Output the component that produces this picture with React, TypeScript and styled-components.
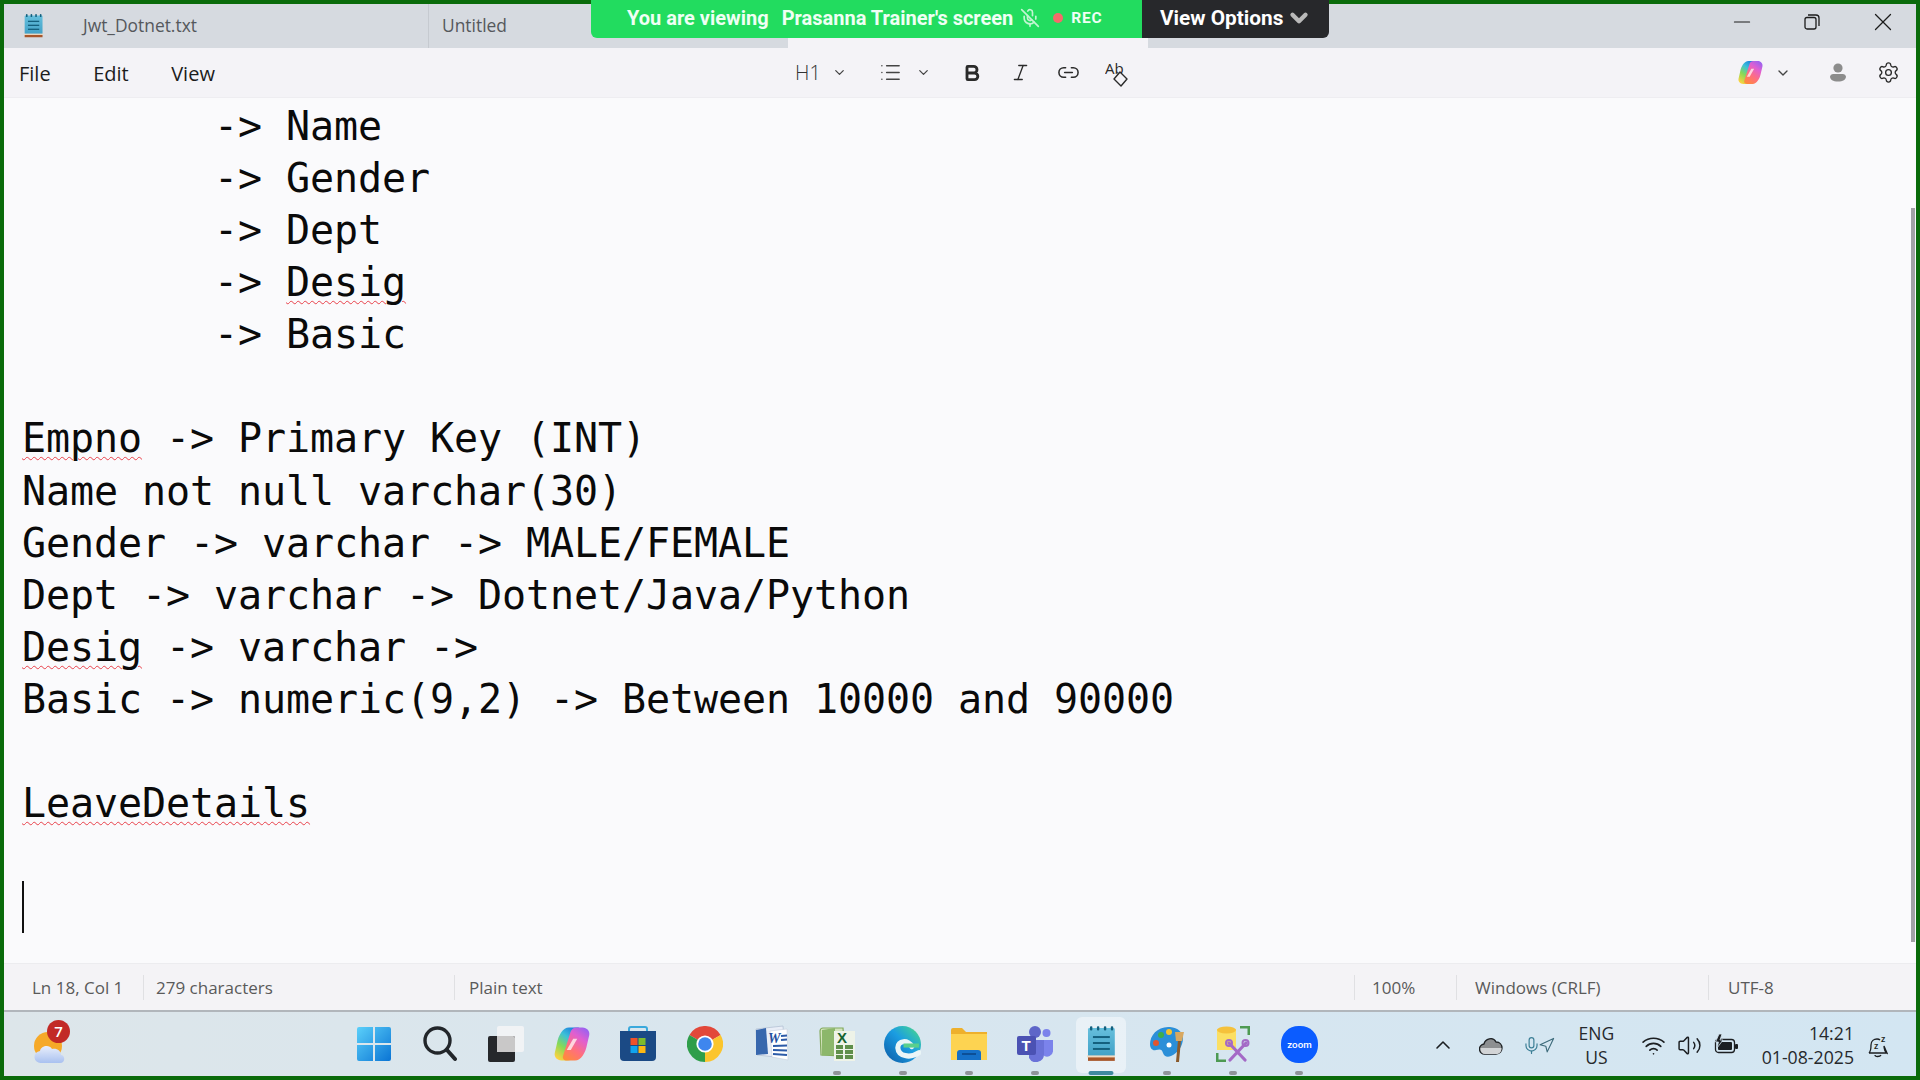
import React from 'react'
import styled, { createGlobalStyle } from 'styled-components'
import { Bold, ChevronDown, ChevronUp, Italic, Link2, List, MicOff, Minus, Mic, Navigation, Settings, Volume2, Wifi, X } from 'lucide-react'

const GlobalStyle = createGlobalStyle`
  html, body { margin: 0; padding: 0; background: #0a6b0a; }
  * { box-sizing: border-box; }
`

const UI_FONT = `"Open Sans", "Noto Sans", sans-serif`

const Frame = styled.div`
  width: 1920px;
  height: 1080px;
  padding: 4px;
  background: #0a6b0a;
  display: flex;
  flex-direction: column;
  position: relative;
  overflow: hidden;
  font-family: ${UI_FONT};
`

/* title bar */
const TitleBar = styled.div`
  height: 44px;
  background: #d6dae0;
  display: flex;
  align-items: stretch;
  flex-shrink: 0;
`
const AppIconBox = styled.div`
  width: 79px;
  padding-left: 20px;
  display: flex;
  align-items: center;
`
const Tab = styled.div<{ $w: number; $line?: boolean }>`
  width: ${p => p.$w}px;
  display: flex;
  align-items: center;
  padding: 0 0 2px ${p => (p.$line ? 13 : 0)}px;
  font-size: 17.4px;
  color: #55585c;
  position: relative;
  border-left: ${p => (p.$line ? '1px solid #c6cad0' : '0')};
`
const ActiveTab = styled.div`
  width: 360px;
  margin-top: auto;
  height: 10px;
  background: #f4f3f7;
`
const WindowControls = styled.div`
  margin-left: auto;
  display: flex;
  align-items: stretch;
`
const WindowButton = styled.div`
  width: 69.5px;
  display: flex;
  align-items: center;
  justify-content: center;
  color: #1c1c1c;
  padding-bottom: 8px;
  &:last-child { padding-left: 4px; }
`

/* zoom banner */
const ViewBanner = styled.div`
  position: absolute;
  top: 0;
  left: 591px;
  height: 38px;
  display: flex;
  font-family: "Roboto", sans-serif;
  font-weight: 700;
  color: #ffffff;
`
const BannerGreen = styled.div`
  width: 551px;
  background: #22dc5f;
  border-radius: 0 0 0 6px;
  display: flex;
  align-items: center;
  padding: 0 0 2px 36px;
  font-size: 20px;
  color: #effff4;
  white-space: nowrap;
`
const BannerName = styled.span`
  margin-left: 13px;
`
const RecDot = styled.span`
  width: 10px;
  height: 10px;
  border-radius: 50%;
  background: #f56a6a;
  margin-left: 13px;
`
const RecLabel = styled.span`
  font-size: 15.5px;
  margin-left: 8px;
  letter-spacing: 0.8px;
`
const BannerDark = styled.div`
  width: 187px;
  background: #27282b;
  border-radius: 0 0 6px 0;
  display: flex;
  align-items: center;
  padding: 0 0 2px 18px;
  font-size: 20.8px;
  white-space: nowrap;
`

/* menu + format bar */
const MenuBar = styled.div`
  height: 50px;
  background: #f4f3f7;
  border-bottom: 1px solid #eeedf1;
  display: flex;
  align-items: center;
  flex-shrink: 0;
  color: #1c1c1c;
`
const MenuGroup = styled.div`
  width: 791px;
  padding: 1px 0 0 15px;
  display: flex;
  gap: 42.5px;
  font-size: 20px;
`
const ToolGroup = styled.div<{ $gap?: number; $ml?: number }>`
  display: flex;
  align-items: center;
  gap: ${p => p.$gap ?? 0}px;
  margin-left: ${p => p.$ml ?? 0}px;
`
const HeadingLabel = styled.span`
  font-size: 20px;
  font-weight: 300;
  color: #333;
  width: 23px;
`
const ToolSlot = styled.div`
  width: 48.5px;
  display: flex;
  justify-content: center;
  align-items: center;
  color: #2a2a2a;
`
const RightTools = styled.div`
  margin-left: auto;
  padding-right: 16px;
  display: flex;
  align-items: center;
`
const GapBox = styled.div<{ $ml: number }>`
  margin-left: ${p => p.$ml}px;
  display: flex;
  align-items: center;
`

/* editor */
const Editor = styled.div`
  flex: 1;
  min-height: 0;
  background: #fafafc;
  position: relative;
  overflow: hidden;
  padding: 2px 0 0 18px;
  font-family: "DejaVu Sans Mono", "Liberation Mono", monospace;
  font-size: 40px;
  line-height: 52.08px;
  letter-spacing: -0.08px;
  color: #0a0a0a;
`
const Line = styled.div`
  height: 52.08px;
  white-space: pre;
`
const Misspelt = styled.span`
  text-decoration: underline wavy #e8404a;
  text-decoration-thickness: 1.2px;
  text-underline-offset: 4px;
`
const Caret = styled.span`
  display: block;
  width: 2px;
  height: 52px;
  background: #111;
`
const ScrollThumb = styled.div`
  position: absolute;
  right: 1px;
  top: 110px;
  width: 4px;
  height: 734px;
  background: #a2a2a6;
`

/* status bar */
const StatusBar = styled.div`
  height: 47px;
  background: #f4f3f6;
  border-top: 1px solid #ececef;
  display: flex;
  align-items: center;
  flex-shrink: 0;
  font-size: 17px;
  color: #5a5a5a;
`
const StatusCell = styled.div<{ $w: number; $pl: number; $line?: boolean }>`
  width: ${p => p.$w}px;
  height: 25px;
  padding-left: ${p => p.$pl}px;
  display: flex;
  align-items: center;
  white-space: nowrap;
  border-left: ${p => (p.$line ? '1px solid #e0e0e3' : '0')};
`

/* taskbar */
const Taskbar = styled.div`
  height: 66px;
  flex-shrink: 0;
  border-top: 2px solid #b1b6bb;
  background: linear-gradient(90deg, #dde6ea 0%, #d8e6ef 45%, #d3e6f2 100%);
  display: flex;
  align-items: center;
  position: relative;
`
const WeatherBox = styled.div`
  width: 337px;
  padding: 7px 0 0 29px;
  display: flex;
  align-items: center;
  position: relative;
`
const WeatherBadge = styled.span`
  position: absolute;
  left: 43px;
  top: -5px;
  width: 23px;
  height: 23px;
  border-radius: 50%;
  background: #c22a26;
  color: #fff;
  font-size: 15px;
  font-weight: 600;
  display: flex;
  align-items: center;
  justify-content: center;
`
const AppSlot = styled.div<{ $active?: boolean }>`
  width: 66.1px;
  height: 64px;
  display: flex;
  align-items: center;
  justify-content: center;
  position: relative;
  &::before {
    content: '';
    display: ${p => (p.$active ? 'block' : 'none')};
    position: absolute;
    top: 5px;
    left: 8px;
    width: 50px;
    height: 56px;
    border-radius: 6px;
    background: rgba(255, 255, 255, 0.45);
  }
  svg { position: relative; }
`
const RunDot = styled.span<{ $active?: boolean }>`
  position: absolute;
  bottom: 1px;
  left: 50%;
  transform: translateX(-50%);
  width: ${p => (p.$active ? 25 : 8)}px;
  height: 4px;
  border-radius: 2px;
  background: ${p => (p.$active ? '#3f8a9e' : '#8f9499')};
`
const Tray = styled.div`
  margin-left: auto;
  display: flex;
  align-items: center;
  padding: 2px 28px 0 0;
  color: #1c1f22;
`
const TrayItem = styled.div<{ $ml: number }>`
  margin-left: ${p => p.$ml}px;
  display: flex;
  align-items: center;
  justify-content: center;
`
const LangText = styled.div`
  font-size: 17.5px;
  line-height: 24px;
  text-align: center;
  color: #26292c;
`
const ClockText = styled.div`
  font-size: 17.7px;
  line-height: 24px;
  text-align: right;
  color: #26292c;
`

const NotepadIcon = ({ size = 36 }: { size?: number }) => (
  <svg width={size * 0.8} height={size} viewBox="0 0 29 36">
    <defs>
      <linearGradient id="np" x1="0" y1="0" x2="0" y2="1">
        <stop offset="0" stopColor="#66bfdc" />
        <stop offset="1" stopColor="#3f9fc6" />
      </linearGradient>
    </defs>
    <rect x="1" y="2" width="27" height="30" rx="1.5" fill="url(#np)" />
    <rect x="1" y="31" width="27" height="4" fill="#a8562a" />
    <rect x="0" y="29.5" width="29" height="2" fill="#f3dcc4" />
    {[4, 11, 18, 25].map(x => (
      <rect key={x} x={x - 1} y="0" width="2.4" height="4.5" rx="1" fill="#14607e" />
    ))}
    <rect x="6" y="10" width="17" height="2" fill="#14607e" />
    <rect x="6" y="16" width="17" height="2" fill="#14607e" />
    <rect x="6" y="22" width="17" height="2" fill="#14607e" />
  </svg>
)

const CopilotIcon = ({ size = 36 }: { size?: number }) => (
  <svg width={size} height={size} viewBox="0 0 24 24">
    <defs>
      <linearGradient id="copL" x1="0.8" y1="0" x2="0.2" y2="1">
        <stop offset="0" stopColor="#1673e0" />
        <stop offset="0.35" stopColor="#3cc0d8" />
        <stop offset="0.65" stopColor="#86d957" />
        <stop offset="1" stopColor="#ffd23f" />
      </linearGradient>
      <linearGradient id="copR" x1="0.8" y1="0" x2="0.2" y2="1">
        <stop offset="0" stopColor="#ff8a3c" />
        <stop offset="0.35" stopColor="#ff6f7d" />
        <stop offset="0.7" stopColor="#e05fd0" />
        <stop offset="1" stopColor="#9a62f0" />
      </linearGradient>
    </defs>
    <path d="M10 1h5.5c1.8 0 3 1.4 2.5 3L13 20c-.6 1.8-2 3-4 3H5C2 23 0 20.5.5 18L2 11.5C3 6 6 1 10 1z" fill="url(#copL)" />
    <path d="M10 1h5.5c1.8 0 3 1.4 2.5 3L13 20c-.6 1.8-2 3-4 3H5C2 23 0 20.5.5 18L2 11.5C3 6 6 1 10 1z" fill="url(#copR)" transform="rotate(180 12 12)" />
    <path d="M12.8 8.5h2.7L11.2 16H8.5z" fill="#ffe9ec" opacity="0.85" />
  </svg>
)

const WindowsIcon = () => (
  <svg width="36" height="36" viewBox="0 0 36 36">
    <defs>
      <linearGradient id="win" x1="0" y1="0" x2="1" y2="1">
        <stop offset="0" stopColor="#5bd0fa" />
        <stop offset="1" stopColor="#0a74d4" />
      </linearGradient>
    </defs>
    <path d="M1 3a2 2 0 0 1 2-2h14v16H1zM19 1h14a2 2 0 0 1 2 2v14H19zM1 19h16v16H3a2 2 0 0 1-2-2zM19 19h16v14a2 2 0 0 1-2 2H19z" fill="url(#win)" />
  </svg>
)

const SearchIcon = () => (
  <svg width="34" height="36" viewBox="0 0 34 36" fill="none" stroke="#22262a" strokeWidth="3.4" strokeLinecap="round">
    <circle cx="14.5" cy="14.5" r="12.5" />
    <path d="M24 24l8 9" strokeWidth="4" />
  </svg>
)

const TaskViewIcon = () => (
  <svg width="36" height="36" viewBox="0 0 36 36">
    <rect x="9" y="0" width="27" height="26" rx="2" fill="#f1f3f5" />
    <rect x="0" y="10" width="27" height="26" rx="2" fill="#26282b" />
    <path d="M9 10h16a2 2 0 0 1 2 2v14H9z" fill="#c9c8c8" />
  </svg>
)

const StoreIcon = () => (
  <svg width="36" height="36" viewBox="0 0 36 36">
    <path d="M9 5V3a2 2 0 0 1 2-2h14a2 2 0 0 1 2 2v2" fill="none" stroke="#3aa9dc" strokeWidth="2" />
    <path d="M0 5h36v26a4 4 0 0 1-4 4H4a4 4 0 0 1-4-4z" fill="#1b4a85" />
    <rect x="10.5" y="12" width="7" height="7" fill="#f0512a" />
    <rect x="18.5" y="12" width="7" height="7" fill="#7ebb2c" />
    <rect x="10.5" y="20" width="7" height="7" fill="#10a4ee" />
    <rect x="18.5" y="20" width="7" height="7" fill="#fdb813" />
  </svg>
)

const ChromeIcon = () => (
  <svg width="36" height="36" viewBox="0 0 36 36">
    <path d="M18 18L2.4 9A18 18 0 0 1 33.6 9z" fill="#e2483a" />
    <path d="M18 18L33.6 9A18 18 0 0 1 18 36z" fill="#fbc52d" />
    <path d="M18 18L18 36A18 18 0 0 1 2.4 9z" fill="#2f9e4a" />
    <circle cx="18" cy="18" r="8.6" fill="#fff" />
    <circle cx="18" cy="18" r="6.8" fill="#3f86ee" />
  </svg>
)

const WordIcon = () => (
  <svg width="36" height="38" viewBox="0 0 36 38">
    <path d="M3 4l27-3 2 32-28-3z" fill="#e9eef7" stroke="#aebbd0" strokeWidth="0.7" />
    <path d="M3 5l10-2 2 26-12 1z" fill="#3767ad" />
    <path d="M34 4l-17 2 2 26 16 3z" fill="#fff" stroke="#c6cfdd" strokeWidth="0.6" />
    <text x="15" y="18" fontFamily="Liberation Serif, serif" fontStyle="italic" fontWeight="700" fontSize="14" fill="#1f4f9e">W</text>
    <path d="M28 11l6-.5M28 15l6-.5M20 21l14-.5M20 25l14 .5M20 29l14 1" stroke="#2c5ba8" strokeWidth="1.8" />
  </svg>
)

const ExcelIcon = () => (
  <svg width="36" height="38" viewBox="0 0 36 38">
    <path d="M1 6a3 3 0 0 1 3-3h20l2 28-24-1z" fill="#d3e4bc" stroke="#82a95c" strokeWidth="1.2" />
    <path d="M3 5l13-2v27l-13 .5z" fill="#8cb76b" />
    <rect x="15" y="6" width="21" height="30" fill="#eef3e8" />
    <text x="18" y="18" fontFamily="Liberation Sans, sans-serif" fontWeight="700" fontSize="15" fill="#17632f">X</text>
    {[20, 25, 30].map(y => (
      <g key={y}>
        <rect x="17" y={y} width="7" height="4" fill="#5f8f4a" />
        <rect x="26" y={y} width="8" height="4" fill="#5f8f4a" />
      </g>
    ))}
  </svg>
)

const EdgeIcon = () => (
  <svg width="37" height="37" viewBox="0 0 36 36">
    <defs>
      <linearGradient id="edgeG" x1="0" y1="1" x2="1" y2="0">
        <stop offset="0" stopColor="#0c59a4" />
        <stop offset="0.55" stopColor="#1b9de2" />
        <stop offset="0.8" stopColor="#35c1b0" />
        <stop offset="1" stopColor="#6fe05f" />
      </linearGradient>
    </defs>
    <circle cx="18" cy="18" r="18" fill="url(#edgeG)" />
    <path d="M27 20C24 13 13 14 13.5 21.5C14 29 25 32 34 26" fill="none" stroke="#eaf5f7" strokeWidth="5" strokeLinecap="round" />
    <path d="M19 19h15" stroke="#59cf8c" strokeWidth="4" />
  </svg>
)

const FolderIcon = () => (
  <svg width="36" height="33" viewBox="0 0 36 33">
    <path d="M0 2a2 2 0 0 1 2-2h9l4 4h21v26H0z" fill="#eeb02c" />
    <path d="M0 6h36v26H0z" fill="#fdd351" />
    <path d="M6 32V25a3 3 0 0 1 3-3h18a3 3 0 0 1 3 3v7z" fill="#1570c8" />
    <rect x="11" y="25" width="14" height="2" fill="#0c4f96" />
  </svg>
)

const TeamsIcon = () => (
  <svg width="36" height="36" viewBox="0 0 36 36">
    <circle cx="29.5" cy="7" r="4" fill="#7b83eb" />
    <circle cx="18" cy="6" r="6" fill="#5e66c8" />
    <path d="M26 14h10v10a6 6 0 0 1-10 5z" fill="#7b83eb" />
    <path d="M12 14h15v14a8 8 0 0 1-15 4z" fill="#6a72d8" />
    <rect x="0" y="10" width="19" height="19" rx="2" fill="#4b52b3" />
    <text x="4.5" y="25" fontFamily="Liberation Sans, sans-serif" fontWeight="700" fontSize="15" fill="#fff">T</text>
  </svg>
)

const PaintIcon = () => (
  <svg width="34" height="37" viewBox="0 0 34 37">
    <path d="M20 1C8 0 0 9 0 18c0 5 3 7 6 6 4-1 6-1 7 3 1 3 4 5 8 3 7-3 12-10 12-18C33 6 28 2 20 1z" fill="#2b8fd8" />
    <circle cx="6" cy="17" r="3" fill="#e2552e" />
    <circle cx="11" cy="9" r="3" fill="#3fae4a" />
    <circle cx="19" cy="6" r="3" fill="#f7c32e" />
    <circle cx="19" cy="19" r="2.5" fill="#fff" />
    <path d="M28 14l-2 22h3l2-22z" fill="#8a5a2b" />
    <path d="M25 6h9l-2 9h-6z" fill="#d8a860" />
  </svg>
)

const DbToolsIcon = () => (
  <svg width="34" height="36" viewBox="0 0 34 36">
    <rect x="1" y="3" width="19" height="21" fill="#fbdf63" />
    <ellipse cx="10.5" cy="4" rx="9.5" ry="3.5" fill="#f5c13b" />
    <path d="M24 1h9v8M1 27v8h9" fill="none" stroke="#4d9a52" strokeWidth="3" />
    <path d="M14 34l16-17M29 34L13 17" stroke="#a46ac6" strokeWidth="3.2" strokeLinecap="round" />
    <circle cx="29.5" cy="17" r="3" fill="none" stroke="#a46ac6" strokeWidth="2" />
    <circle cx="13" cy="17" r="3" fill="none" stroke="#a46ac6" strokeWidth="2" />
  </svg>
)

const ZoomAppIcon = () => (
  <svg width="37" height="37" viewBox="0 0 36 36">
    <rect width="36" height="36" rx="17" fill="#0b5cff" />
    <text x="18" y="21.5" textAnchor="middle" fontFamily="Roboto, sans-serif" fontWeight="500" fontSize="9.5" fill="#fff">zoom</text>
  </svg>
)

const WeatherIcon = () => (
  <svg width="34" height="32" viewBox="0 0 34 32">
    <defs>
      <linearGradient id="cl" x1="0" y1="0" x2="0" y2="1">
        <stop offset="0" stopColor="#e8eefb" />
        <stop offset="1" stopColor="#a9c1f0" />
      </linearGradient>
    </defs>
    <circle cx="15" cy="14" r="14" fill="#f6a928" />
    <path d="M8 31a6 6 0 0 1-1-12c1-5 9-7 12-2 5-1 9 2 9 6 4 0 5 8-1 8z" fill="url(#cl)" />
  </svg>
)

const EraserAbIcon = () => (
  <svg width="24" height="30" viewBox="0 -3 24 30">
    <text x="0" y="13" fontFamily="Open Sans, sans-serif" fontSize="15" fill="#2a2a2a">Ab</text>
    <path d="M15 11l7 7-6 7-7-7z" fill="#f4f3f7" stroke="#2a2a2a" strokeWidth="1.4" strokeLinejoin="round" />
  </svg>
)

const RestoreIcon = () => (
  <svg width="16" height="16" viewBox="0 0 16 16" fill="none" stroke="#1c1c1c" strokeWidth="1.3">
    <rect x="1" y="3.5" width="11" height="11.5" rx="2" />
    <path d="M4 1h8a3 3 0 0 1 3 3v8" />
  </svg>
)

const PersonIcon = () => (
  <svg width="16" height="19" viewBox="0 0 16 19" fill="#8c8c8c">
    <circle cx="8" cy="5" r="4.6" />
    <path d="M0 13.5a3 3 0 0 1 3-2.5h10a3 3 0 0 1 3 2.5c0 3-3 5-8 5s-8-2-8-5z" />
  </svg>
)

const TrayCloud = () => (
  <svg width="24" height="19" viewBox="0 0 24 19">
    <path d="M6 18a5 5 0 0 1-1-10c1-5 9-8 12-2 4 0 6 3 6 6s-2 6-6 6z" fill="#8d8f91" stroke="#1e2124" strokeWidth="1.3" />
    <path d="M1.5 12h21c0 4-2 6-5.5 6H6c-3 0-4.5-2-4.5-6z" fill="#d2d4d6" />
  </svg>
)

const TrayBattery = () => (
  <svg width="24" height="22" viewBox="0 0 24 22">
    <rect x="1.5" y="5.5" width="19" height="13" rx="3" fill="none" stroke="#1c1f22" strokeWidth="1.3" />
    <rect x="4" y="8" width="14" height="8" rx="1" fill="#1c1f22" />
    <rect x="21" y="10" width="3" height="5" rx="1" fill="#1c1f22" />
    <path d="M5 0L1.5 8h3L3 14l6-8H6l2-6z" fill="#1c1f22" stroke="#d6e6f1" strokeWidth="0.8" />
  </svg>
)

const TrayBell = () => (
  <svg width="20" height="28" viewBox="0 -4 20 28" fill="none" stroke="#1c1f22" strokeWidth="1.3">
    <path d="M1 18c2-2 2-4 2-8 0-4 3-6 6-6 1 0 2 0 3 1M16 11c0 3 0 5 3 7zM1 18h18" />
    <path d="M7 20c0 2 5 2 6 0" />
    <text x="6" y="14" fontFamily="Open Sans, sans-serif" fontSize="9" fontWeight="600" fill="#1c1f22" stroke="none">z</text>
    <text x="13" y="7" fontFamily="Open Sans, sans-serif" fontSize="9" fontWeight="600" fill="#1c1f22" stroke="none">z</text>
  </svg>
)

const apps: { id: string; icon: React.ReactNode; running?: boolean; active?: boolean }[] = [
  { id: 'start', icon: <WindowsIcon /> },
  { id: 'search', icon: <SearchIcon /> },
  { id: 'taskview', icon: <TaskViewIcon /> },
  { id: 'copilot', icon: <CopilotIcon /> },
  { id: 'store', icon: <StoreIcon /> },
  { id: 'chrome', icon: <ChromeIcon /> },
  { id: 'word', icon: <WordIcon /> },
  { id: 'excel', icon: <ExcelIcon />, running: true },
  { id: 'edge', icon: <EdgeIcon />, running: true },
  { id: 'folder', icon: <FolderIcon />, running: true },
  { id: 'teams', icon: <TeamsIcon />, running: true },
  { id: 'notepad', icon: <NotepadIcon />, running: true, active: true },
  { id: 'paint', icon: <PaintIcon />, running: true },
  { id: 'dbtools', icon: <DbToolsIcon />, running: true },
  { id: 'zoom', icon: <ZoomAppIcon />, running: true },
]

const App = () => {
  return (
    <Frame>
      <GlobalStyle />
      <TitleBar>
        <AppIconBox>
          <NotepadIcon size={24} />
        </AppIconBox>
        <Tab $w={345}>Jwt_Dotnet.txt</Tab>
        <Tab $w={360} $line>Untitled</Tab>
        <ActiveTab />
        <WindowControls>
          <WindowButton><Minus size={26} strokeWidth={1} /></WindowButton>
          <WindowButton><RestoreIcon /></WindowButton>
          <WindowButton><X size={30} strokeWidth={1.05} /></WindowButton>
        </WindowControls>
      </TitleBar>

      <ViewBanner>
        <BannerGreen>
          You are viewing
          <BannerName>Prasanna Trainer's screen</BannerName>
          <GapBox $ml={7}><MicOff size={20} color="#c3f5d3" /></GapBox>
          <RecDot />
          <RecLabel>REC</RecLabel>
        </BannerGreen>
        <BannerDark>
          View Options
          <GapBox $ml={3}><ChevronDown size={26} strokeWidth={4} color="#b9b9b9" /></GapBox>
        </BannerDark>
      </ViewBanner>

      <MenuBar>
        <MenuGroup>
          <span>File</span>
          <span>Edit</span>
          <span>View</span>
        </MenuGroup>
        <ToolGroup $gap={14}>
          <HeadingLabel>H1</HeadingLabel>
          <ChevronDown size={15} color="#444" />
        </ToolGroup>
        <ToolGroup $gap={14} $ml={32}>
          <List size={23} strokeWidth={1.6} color="#444" />
          <ChevronDown size={15} color="#444" />
        </ToolGroup>
        <ToolGroup $ml={16.5}>
          <ToolSlot><Bold size={20} strokeWidth={3.4} /></ToolSlot>
          <ToolSlot><Italic size={21} strokeWidth={1.5} /></ToolSlot>
          <ToolSlot><Link2 size={23} strokeWidth={1.6} /></ToolSlot>
          <ToolSlot><EraserAbIcon /></ToolSlot>
        </ToolGroup>
        <RightTools>
          <CopilotIcon size={25} />
          <GapBox $ml={12}><ChevronDown size={16} color="#444" /></GapBox>
          <GapBox $ml={39}><PersonIcon /></GapBox>
          <GapBox $ml={31}><Settings size={23} strokeWidth={1.4} color="#2a2a2a" /></GapBox>
        </RightTools>
      </MenuBar>

      <Editor>
        <Line>{'        -> Name'}</Line>
        <Line>{'        -> Gender'}</Line>
        <Line>{'        -> Dept'}</Line>
        <Line>{'        -> '}<Misspelt>Desig</Misspelt></Line>
        <Line>{'        -> Basic'}</Line>
        <Line />
        <Line><Misspelt>Empno</Misspelt>{' -> Primary Key (INT)'}</Line>
        <Line>Name not null varchar(30)</Line>
        <Line>{'Gender -> varchar -> MALE/FEMALE'}</Line>
        <Line>{'Dept -> varchar -> Dotnet/Java/Python'}</Line>
        <Line><Misspelt>Desig</Misspelt>{' -> varchar ->'}</Line>
        <Line>{'Basic -> numeric(9,2) -> Between 10000 and 90000'}</Line>
        <Line />
        <Line><Misspelt>LeaveDetails</Misspelt></Line>
        <Line />
        <Line><Caret /></Line>
        <ScrollThumb />
      </Editor>

      <StatusBar>
        <StatusCell $w={139} $pl={28}>Ln 18, Col 1</StatusCell>
        <StatusCell $w={311} $pl={12} $line>279 characters</StatusCell>
        <StatusCell $w={900} $pl={14} $line>Plain text</StatusCell>
        <StatusCell $w={102} $pl={17} $line>100%</StatusCell>
        <StatusCell $w={252} $pl={18} $line>Windows (CRLF)</StatusCell>
        <StatusCell $w={200} $pl={19} $line>UTF-8</StatusCell>
      </StatusBar>

      <Taskbar>
        <WeatherBox>
          <WeatherIcon />
          <WeatherBadge>7</WeatherBadge>
        </WeatherBox>
        {apps.map(app => (
          <AppSlot key={app.id} $active={app.active}>
            {app.icon}
            {app.running && <RunDot $active={app.active} />}
          </AppSlot>
        ))}
        <Tray>
          <ChevronUp size={24} strokeWidth={1.6} />
          <TrayItem $ml={24}><TrayCloud /></TrayItem>
          <TrayItem $ml={19}><Mic size={19} strokeWidth={1.5} color="#3c7f96" /></TrayItem>
          <TrayItem $ml={-3}><Navigation size={17} strokeWidth={1.6} color="#3c6a7a" /></TrayItem>
          <TrayItem $ml={23.5}>
            <LangText>ENG<br />US</LangText>
          </TrayItem>
          <TrayItem $ml={26.5}><Wifi size={25} strokeWidth={1.6} /></TrayItem>
          <TrayItem $ml={11}><Volume2 size={25} strokeWidth={1.4} /></TrayItem>
          <TrayItem $ml={12}><TrayBattery /></TrayItem>
          <TrayItem $ml={24}>
            <ClockText>14:21<br />01-08-2025</ClockText>
          </TrayItem>
          <TrayItem $ml={14}><TrayBell /></TrayItem>
        </Tray>
      </Taskbar>
    </Frame>
  )
}

export default App
